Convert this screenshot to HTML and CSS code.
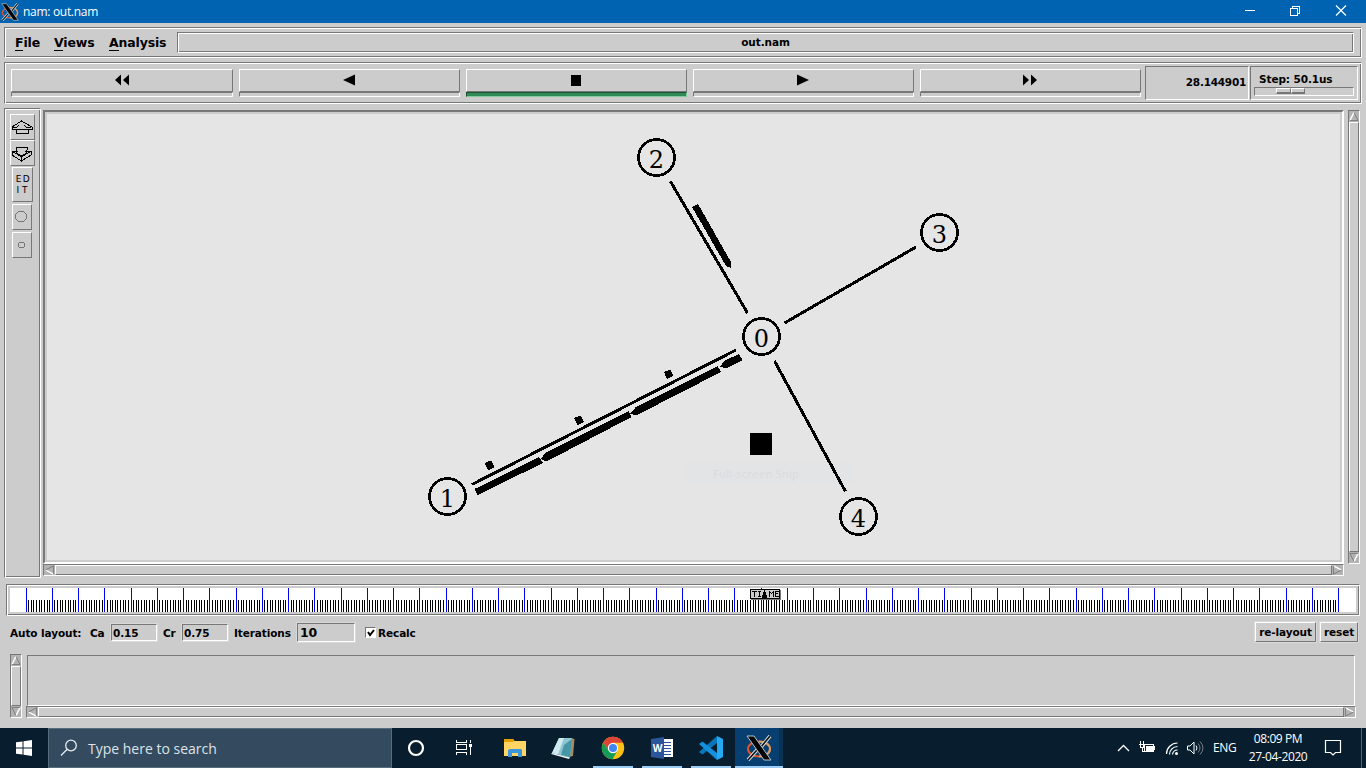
FILE: index.html
```html
<!DOCTYPE html>
<html lang="en">
<head>
<meta charset="utf-8">
<title>nam: out.nam</title>
<link rel="stylesheet" href="styles.css">
</head>
<body>
<svg width="0" height="0" class="defs">
  <symbol id="xlogo" viewBox="0 0 26 26">
    <ellipse cx="13" cy="14" rx="11" ry="7.500" fill="none" stroke="#e0552c" stroke-width="2"/>
    <path d="M13 6.500c7 0 11 3.500 11 7.500s-4 7.500-11 7.500" fill="none" stroke="#c9a368" stroke-width="2"/>
    <path d="M24 1L15 12M11 15L2 25" stroke="#d8dde0" stroke-width="3.600"/>
    <path d="M24 1L15 12M11 15L2 25" stroke="#111" stroke-width="1.600"/>
    <path d="M1 1h7l17 24h-7z" fill="#050505" stroke="#b9c4cc" stroke-width="1"/>
  </symbol>
  <symbol id="tri" viewBox="0 0 11 11">
    <path d="M5.500 1L1 10" stroke="#fff" stroke-width="1.500" fill="none"/>
    <path d="M5.500 1L10 10H1" stroke="#777" fill="none"/>
  </symbol>
</svg>

<header class="titlebar">
  <svg class="app-icon" width="18" height="18"><use href="#xlogo"/></svg>
  <span class="title">nam: out.nam</span>
  <svg class="winbtns" width="110" height="20" fill="none" stroke="#fff" shape-rendering="crispEdges">
    <path d="M5 8.500h10M50.500 6.500h7v7h-7zM52.500 6V4.500h7v7H58"/>
    <path d="M96 3.500l10 10M106 3.500L96 13.500" shape-rendering="auto" stroke-width="1.200"/>
  </svg>
</header>

<nav class="menubar groove">
  <span class="m-file"><u>F</u>ile</span><span class="m-views"><u>V</u>iews</span><span class="m-an"><u>A</u>nalysis</span>
  <div class="filename groove">out.nam</div>
</nav>

<section class="playbar groove">
  <div class="buttons">
    <div class="pb"><div class="face"><svg width="16" height="12"><path d="M8 .5v11l-6-5.500zM16 .5v11l-6-5.500z"/></svg></div><div class="lamp"></div></div>
    <div class="pb"><div class="face"><svg width="16" height="12"><path d="M14 .5v11L2 6z"/></svg></div><div class="lamp"></div></div>
    <div class="pb"><div class="face"><svg width="16" height="12"><path d="M3 1h10v11H3z" shape-rendering="crispEdges"/></svg></div><div class="lamp on"></div></div>
    <div class="pb"><div class="face"><svg width="16" height="12"><path d="M2 .5v11L14 6z"/></svg></div><div class="lamp"></div></div>
    <div class="pb"><div class="face"><svg width="16" height="12"><path d="M1 .5v11L7 6zM9 .5v11L15 6z"/></svg></div><div class="lamp"></div></div>
  </div>
  <div class="time sunken">28.144901</div>
  <div class="step sunken"><span>Step: 50.1us</span><div class="scale sunken"><i></i><i></i></div></div>
</section>

<main class="work">
  <aside class="tools groove">
    <div class="tool raised"><svg width="23" height="18"><path d="M10.500 3L1 9v2h4v4h12v-4h4V9zM1 9h5L8 7M20 9h-5L13 7M5 11h12"/></svg></div>
    <div class="tool raised"><svg width="23" height="18"><path d="M5 3h11v3l-2 2M5 3v3l2 2M1 7h5l-1 2 5.500 3 5.500-3-1-2h5v4l-9.500 6L1 11zM1 7l9.500 6L20 7M10.500 12v5"/></svg></div>
    <div class="tool edit raised"><span>ED</span><span>IT</span></div>
    <div class="tool circ raised"><svg width="18" height="18"><circle cx="8" cy="8.500" r="5.500" stroke="#777"/></svg></div>
    <div class="tool circ raised"><svg width="18" height="18"><circle cx="8.500" cy="9" r="3" stroke="#777"/></svg></div>
  </aside>
  <div class="view">
    <div class="canvas">
      <svg width="1293" height="446" viewBox="47 114 1293 446">
        <rect x="684" y="462" width="170" height="22" fill="#e3e4e5"/>
        <text x="713" y="478" class="ghost" textLength="86">Full-screen Snip</text>
        <g shape-rendering="crispEdges" stroke="#000" stroke-width="3" fill="none">
          <path d="M670.500 181.500L747.500 313M784.500 323L916 247M774.500 361L845.500 491.500M472 484.500L736 350"/>
          <g stroke-width="2.700"><circle cx="761.500" cy="336.500" r="18"/><circle cx="447.500" cy="496.500" r="18"/><circle cx="656.500" cy="157.500" r="18"/><circle cx="939.500" cy="232.500" r="18"/><circle cx="858.500" cy="516.500" r="18"/></g>
        </g>
        <g shape-rendering="crispEdges">
          <path d="M692 207l6-3 33 58v6l-5-2z"/>
          <path d="M474.500 489l64.500-32 4 6-65.500 32z"/>
          <path d="M540.500 459l5-6 83-42 3 6-83 43.500h-5z"/>
          <path d="M630.500 413.500l5-6 82-41.500 3.500 6-83 42.500h-5z"/>
          <path d="M720 366.500l5-6 14-6.500 3.500 6-14 7.500h-6z"/>
          <path d="M484.500 463l6.500-2.500 3.500 6.500-6 3.500zM574 418l6.500-2.500 3.500 6.500-6.500 3zM664 372l6.500-2.500 3 6.500-6.500 3z"/>
          <path d="M750 433h22v22h-22z"/>
        </g>
        <g class="nums"><text x="761.500" y="347">0</text><text x="447.500" y="507">1</text><text x="656.500" y="168">2</text><text x="939.500" y="243">3</text><text x="858.500" y="527">4</text></g>
      </svg>
    </div>
    <div class="hscroll"><svg width="11" height="10" class="left"><use href="#tri"/></svg><div class="thumb"></div><svg width="11" height="10" class="right"><use href="#tri"/></svg></div>
  </div>
  <div class="vscroll"><svg width="10" height="11"><use href="#tri"/></svg><div class="thumb"></div><svg width="10" height="11" class="down"><use href="#tri"/></svg></div>
</main>

<section class="timeline groove">
  <svg width="1346" height="24" shape-rendering="crispEdges">
    <rect width="1346" height="24" fill="#fff"/>
    <path id="minor" stroke="#000"/>
    <path id="major" stroke="#00f"/>
    <path d="M741 11.500h29.500V2" fill="none" stroke="#777"/>
    <rect x="740.500" y="1.500" width="29" height="9" fill="#ccc" stroke="#000"/>
    <path d="M742 3.500h5M744.500 3v6M748 3.500h3M749.500 3v6M748 8.500h3M759.500 9V3M760 4.500h1M761 5.500h1M762 4.500h1M763.500 3v6M765.500 3v6M765 3.500h4M765 5.500h3M765 8.500h4" stroke="#000" fill="none"/>
    <path d="M754 1h1v3h1v3h1v4h-5V7h1V4h1z"/>
  </svg>
</section>

<section class="layout-row">
  <span class="l-auto">Auto layout:</span><span class="l-ca">Ca</span><div class="entry">0.15</div>
  <span class="l-cr">Cr</span><div class="entry">0.75</div>
  <span class="l-it">Iterations</span><div class="entry big">10</div>
  <div class="check"><svg width="10" height="10"><path d="M2 4l2 3 4-5" fill="none" stroke="#000" stroke-width="2"/></svg></div><span class="l-re">Recalc</span>
  <div class="btn relay">re-layout</div><div class="btn reset">reset</div>
</section>

<section class="notes">
  <div class="vscroll"><svg width="10" height="11"><use href="#tri"/></svg><div class="thumb"></div><svg width="10" height="11" class="down"><use href="#tri"/></svg></div>
  <div class="notecol">
    <div class="notebox"></div>
    <div class="hscroll"><svg width="11" height="10" class="left"><use href="#tri"/></svg><div class="thumb"></div><svg width="11" height="10" class="right"><use href="#tri"/></svg></div>
  </div>
</section>

<footer class="taskbar">
  <div class="start"><svg width="16" height="16" fill="#fff"><path d="M0 2.300L6.500 1.400V7.500H0zM7.500 1.200L16 0v7.500H7.500zM0 8.500h6.500v6.100L0 13.700zM7.500 8.500H16V16l-8.500-1.200z"/></svg></div>
  <div class="search">
    <svg width="18" height="18" fill="none" stroke="#e6ebef" stroke-width="1.300"><circle cx="11" cy="6.500" r="5.300"/><path d="M7.200 10.300L1 16.500"/></svg>
    <span>Type here to search</span>
  </div>
  <div class="apps">
    <div class="app"><svg width="26" height="26"><circle cx="13" cy="13" r="7" fill="none" stroke="#fff" stroke-width="2.200"/></svg></div>
    <div class="app"><svg width="26" height="26" fill="none" stroke="#fff" shape-rendering="crispEdges"><path d="M4.500 5v2.500h10V5M4.500 20v-2.500h10V20M4.500 9.500h10v5h-10zM18.500 5v3M18.500 12v8"/><path d="M17 9h3v3h-3z" fill="#fff" stroke="none"/></svg></div>
    <div class="app"><svg width="26" height="26"><path d="M3 4h9l1.500 2H25v15H3z" fill="#ffd563"/><path d="M3 4h9l1.500 2L12 7H3z" fill="#e5a100"/><path d="M7 22v-7l2-1h11l1 1v7h-4v-4h-6v4z" fill="#3b97dd"/></svg></div>
    <div class="app"><svg width="26" height="26"><path d="M21 3l3.500 1-1.500 17-4 1z" fill="#a58b64"/><path d="M9 3l13 0-2 19.500L2 18z" fill="#8cc6d1"/><path d="M9 3h5L8 19.500 2 18z" fill="#cfeaee"/><path d="M14 10l8-6-2 18.500-9-3z" fill="#4796a5"/><path d="M2 18l18 4.500-1 1.500L1 19z" fill="#e8f3f3"/></svg></div>
    <div class="app run"><svg width="26" height="26"><circle cx="13" cy="13" r="11.200" fill="#fbc116"/><path d="M13 7.800h9.900A11.200 11.200 0 0 0 3.300 7.400L8.500 15.600z" fill="#db4437"/><path d="M3.300 7.400A11.200 11.200 0 0 0 12.500 24.200L17.500 15.600 8.500 15.600z" fill="#169a58"/><circle cx="13" cy="13" r="5.200" fill="#fff"/><circle cx="13" cy="13" r="4" fill="#4285f4"/></svg></div>
    <div class="app run"><svg width="26" height="26"><path d="M13 4h11v18H13z" fill="#fff"/><path d="M15 7.500h7M15 10.500h7M15 13.500h7M15 16.500h7M15 19.500h7" stroke="#2b579a"/><path d="M2 4l13-2v22L2 22z" fill="#2b579a"/><text x="8.500" y="17" class="w">W</text></svg></div>
    <div class="app run"><svg width="26" height="26"><path d="M19 1l6 3v18l-6 3z" fill="#24a9f2"/><path d="M19 1v7L4.500 19.500 1 17z" fill="#0877b9"/><path d="M1 9l3.500-2.500L19 18v7z" fill="#1490df"/></svg></div>
    <div class="app run active"><svg width="26" height="26"><use href="#xlogo"/></svg></div>
  </div>
  <div class="tray">
    <svg width="94" height="24" fill="none" stroke="#fff">
      <path d="M1 15l5.500-5.500L12 15" stroke-width="1.300"/>
      <g transform="translate(-2 0)" shape-rendering="crispEdges"><path d="M29.500 8.500h9v7h-9zM39.500 10v4"/><path d="M31 10h6v4h-6z" fill="#fff"/><path d="M25.500 5v3M28.500 5v3M24 8.500h6M25.500 9v2h3V9M27 11v4.500h3"/></g>
      <path d="M49.500 18a11 11 0 0 1 11-11M52.500 18.500a8 8 0 0 1 8-8M55.500 18.500a5 5 0 0 1 5-4.500" stroke-width="1.200"/><circle cx="59.500" cy="17.500" r="1.500" fill="#fff" stroke="none"/>
      <path d="M70.500 10h2.500l4-4v12l-4-4h-2.500z"/><path d="M79 9.500q2 2.500 0 5"/><path d="M81 7.500q4 4.500 0 9M83 5.500q6 6.500 0 13" stroke="#73808a"/>
    </svg>
    <span class="eng">ENG</span>
    <div class="clock"><span class="c1">08:09 PM</span><span class="c2">27-04-2020</span></div>
    <svg class="note" width="18" height="18" fill="none" stroke="#fff" stroke-width="1.200"><path d="M1.500 1.500h15v12h-5L9 16l-2.500-2.500h-5z"/></svg>
    <i class="peek"></i>
  </div>
</footer>
<script src="ticks.js"></script>
</body>
</html>
```
FILE: styles.css
```css
* { box-sizing: border-box; }
body { margin: 0; width: 1366px; height: 768px; overflow: hidden; background: #ccc; color: #000; font: bold 10.5px/12px "DejaVu Sans", sans-serif; letter-spacing: -.1px; display: flex; flex-direction: column; }
svg { display: block; flex: none; }
.defs { position: absolute; }
.groove { border: 1px solid; border-color: #777 #fff #fff #777; box-shadow: inset 1px 1px #fff, inset -1px -1px #777; }
.sunken { border: 1px solid; border-color: #777 #fff #fff #777; }
.raised { border: 1px solid; border-color: #fff #777 #777 #fff; }

.titlebar { height: 23px; flex: none; background: #0063b1; color: #fff; display: flex; align-items: center; padding-left: 1px; }
.title { font: 12px/16px "Open Sans", "Noto Sans", sans-serif; letter-spacing: -.3px; margin-left: 4px; flex: 1; }
.winbtns { margin-right: 16px; }

.menubar { height: 31px; width: 1358px; flex: none; margin: 4px 0 0 4px; display: flex; align-items: center; font-size: 12.5px; line-height: 15px; letter-spacing: -.15px; }
.menubar u { text-decoration: none; border-bottom: 1px solid #000; }
.m-file { margin-left: 10px; width: 39px; }
.m-views { width: 55px; }
.m-an { width: 68px; }
.filename { width: 1177px; height: 21px; text-align: center; font-size: 10.5px; line-height: 19px; letter-spacing: -.1px; }

.playbar { height: 42px; width: 1358px; flex: none; margin: 4px 0 0 4px; display: flex; align-items: flex-start; padding: 3px 0 0 6px; }
.buttons { width: 1130px; display: grid; grid-template-columns: 222px 221px 221px 221px 221px; gap: 6px; margin: 3px 4px 0 0; }
.face { height: 23px; border: 1px solid; border-color: #fff #777 #777 #fff; display: flex; justify-content: center; padding: 5px 2px 0 0; }
.face svg { margin-top: -1px; }
.lamp { height: 5px; border: 1px solid; border-color: #777 #fff #fff #777; }
.lamp.on { background: #2e8b57; border-color: #1b5334 #82c9a0 #82c9a0 #1b5334; }
.time { width: 104px; height: 34px; text-align: right; line-height: 31px; padding-right: 2px; letter-spacing: -.25px; }
.step { width: 108px; height: 34px; margin-left: 1px; padding: 6px 0 0 3px; }
.step span { display: block; padding-left: 5px; height: 14px; white-space: nowrap; }
.scale { width: 100px; height: 9px; display: flex; padding-left: 21px; }
.scale i { width: 15px; height: 6px; border: 1px solid; border-color: #fff #777 #777 #fff; border-bottom-width: 2px; }
.scale i:last-child { width: 14px; }

.work { height: 470px; flex: none; margin: 4px 0 0 4px; display: flex; }
.tools { width: 37px; height: 470px; padding: 5px 0 0 5px; }
.tool { width: 25px; height: 26px; display: flex; flex-direction: column; align-items: center; justify-content: center; }
.tool svg { fill: none; stroke: #000; shape-rendering: crispEdges; }
.edit { width: 21px; height: 35px; margin: 1px 0 2px 2px; font: 9px/11px "DejaVu Sans", sans-serif; letter-spacing: 1.500px; padding-left: 2px; }
.edit span:last-child { letter-spacing: 3px; }
.circ { width: 20px; margin: 0 0 2px 2px; }
.view { width: 1301px; margin: 2px 4px 0 2px; }
.canvas { width: 1301px; height: 454px; border: 2px solid; border-color: #777 #fff #fff #777; background: #e5e5e5; box-shadow: inset 0 0 0 2px #ccc; padding: 2px; }
.ghost { font: 11px "Open Sans", sans-serif; fill: #d9dbdd; }
.nums { font: 24px "DejaVu Serif", serif; text-anchor: middle; letter-spacing: 0; }
.hscroll { height: 12px; display: flex; border: 1px solid; border-color: #777 #fff #fff #777; background: #b3b3b3; }
.hscroll .thumb { flex: 1; background: #ccc; border: 1px solid; border-color: #fff #777 #777 #fff; }
.left { transform: rotate(-90deg); }
.right { transform: rotate(90deg); }
.down { transform: rotate(180deg); }
.vscroll { width: 12px; height: 454px; margin-top: 2px; display: flex; flex-direction: column; border: 1px solid; border-color: #777 #fff #fff #777; background: #b3b3b3; }
.vscroll .thumb { flex: 1; background: #ccc; border: 1px solid; border-color: #fff #777 #777 #fff; }

.timeline { width: 1354px; height: 32px; flex: none; margin: 6px 0 0 6px; padding: 3px; }

.layout-row { height: 26px; flex: none; margin: 3px 8px 0 10px; display: flex; align-items: center; white-space: nowrap; }
.layout-row > span { padding-top: 1px; }
.l-auto { width: 80px; } .l-ca { width: 21px; } .l-cr { width: 19px; margin-left: 6px; } .l-it { width: 63px; margin-left: 6px; }
.entry { width: 46px; height: 17px; border: 1px solid; border-color: #777 #fff #fff #777; padding-left: 1px; line-height: 16px; box-shadow: 0 0 0 1px #d9d9d9; }
.entry.big { width: 58px; height: 19px; font-size: 12.5px; line-height: 18px; padding-left: 2px; }
.check { width: 11px; height: 11px; background: #fff; border: 1px solid; border-color: #777 #fff #fff #777; margin: 0 2px 0 10px; }
.btn { height: 20px; border: 1px solid; border-color: #fff #777 #777 #fff; text-align: center; line-height: 19px; box-shadow: 0 0 0 1px #d9d9d9; }
.relay { width: 61px; margin-left: auto; }
.reset { width: 38px; margin-left: 4px; }

.notes { height: 83px; flex: none; display: flex; padding: 9px 0 0 10px; }
.notes .vscroll { height: 64px; margin: 0; }
.notecol { width: 1330px; margin-left: 4px; }
.notebox { height: 51px; margin: 1px 1px 0; border: 1px solid; border-color: #777 #fff #fff #777; }

.taskbar { height: 40px; flex: none; background: #081d2d; color: #fff; display: flex; font: 12px/18px "Open Sans", "Noto Sans", sans-serif; letter-spacing: 0; }
.start { width: 48px; padding: 12px 16px; }
.search { width: 344px; border: 1px solid #576b7b; background: #344b5f; display: flex; align-items: center; padding-left: 11px; color: #dce3e8; font-size: 14px; }
.search span { margin-left: 10px; padding-top: 1px; }
.apps { display: flex; gap: 1px; }
.app { width: 48px; height: 40px; display: flex; justify-content: center; padding-top: 7px; }
.run { background: linear-gradient(#99cdf5, #99cdf5) 5px 38px / 40px 2px no-repeat; padding-left: 1px; }
.active { padding-left: 0; background: linear-gradient(#99cdf5, #99cdf5) 0 38px / 48px 2px no-repeat, linear-gradient(90deg, #063f70 44px, #0a3253 44px); }
.w { font: bold 10px "Open Sans", sans-serif; fill: #fff; text-anchor: middle; }
.tray { margin-left: auto; display: flex; align-items: center; }
.eng { margin-left: 2px; width: 34px; letter-spacing: -.3px; }
.clock { width: 62px; display: flex; flex-direction: column; align-items: center; white-space: nowrap; letter-spacing: -.4px; }
.note { margin-left: 15px; }
.peek { width: 1px; height: 40px; background: #56646f; margin: 0 4px 0 19px; }
```
FILE: ticks.js
```js
// Ten minor ticks between each pair of major ticks on the time ruler.
let minor = "", major = "";
for (let i = 0; i <= 500; i++) {
  const x = Math.floor(16 + i * 2.625) + 0.5;
  if (i % 10 === 0) major += `M${x} 0V24`;
  else minor += `M${x} 12V24`;
}
document.getElementById("minor").setAttribute("d", minor);
document.getElementById("major").setAttribute("d", major);
```
